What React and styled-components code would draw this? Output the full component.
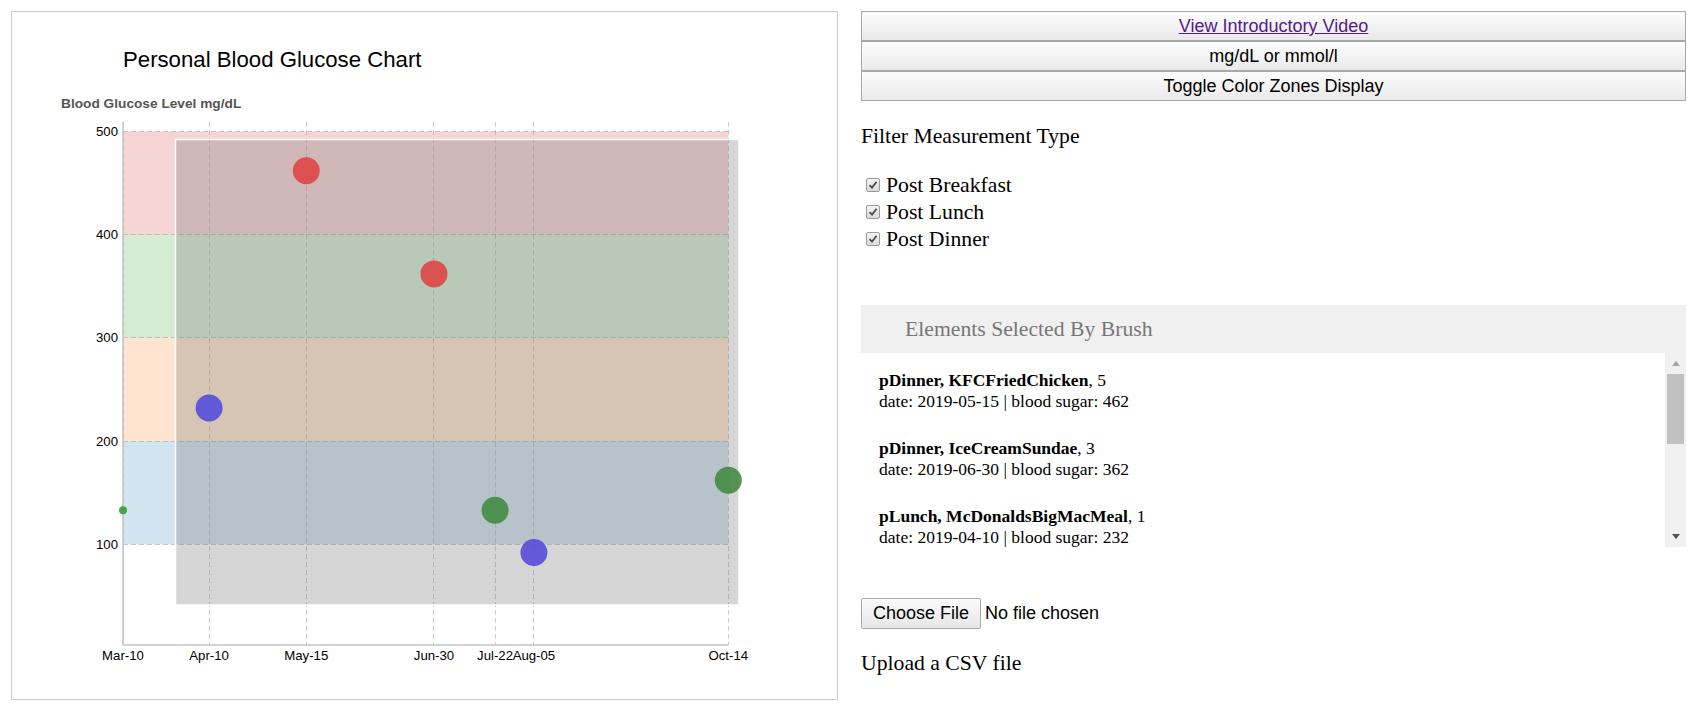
import React from "react";
import styled, { createGlobalStyle } from "styled-components";

const GlobalStyle = createGlobalStyle`
  body {
    margin: 0;
    background: #fff;
    color: #000;
    font-family: "Liberation Serif", "Times New Roman", serif;
  }
`;

const Page = styled.div`
  display: flex;
  align-items: flex-start;
  gap: 23px;
  padding: 11px 11px 0;
`;

/* ---------- chart ---------- */

const ChartPanel = styled.div`
  flex: none;
  width: 825px;
  height: 687px;
  border: 1px solid #ccc;
`;

const ChartSvg = styled.svg`
  display: block;
  font-family: "Liberation Sans", Arial, sans-serif;

  .title {
    font-size: 22.2px;
    fill: #000;
  }
  .axis-label {
    font-size: 13.7px;
    font-weight: bold;
    fill: #555;
  }
  .tick {
    font-size: 13.2px;
    fill: #000;
  }
  .grid {
    stroke: #999;
    stroke-opacity: 0.5;
    stroke-dasharray: 5 3;
    shape-rendering: crispEdges;
  }
  .axis {
    stroke: #c4c4c4;
    stroke-width: 1.5;
  }
  .brush {
    fill: #777;
    fill-opacity: 0.3;
    stroke: #fff;
    stroke-width: 1.5;
  }
`;

const X0 = 123;
const PX_PER_DAY = 2.7766;
const xOf = (d) => X0 + d * PX_PER_DAY;
const yOf = (v) => 647.5 - v * 1.032;

const dates = [
  { label: "Mar-10", d: 0 },
  { label: "Apr-10", d: 31 },
  { label: "May-15", d: 66 },
  { label: "Jun-30", d: 112 },
  { label: "Jul-22", d: 134 },
  { label: "Aug-05", d: 148 },
  { label: "Oct-14", d: 218 },
];

const zones = [
  { from: 400, to: 500, color: "#d62728" },
  { from: 300, to: 400, color: "#2ca02c" },
  { from: 200, to: 300, color: "#ff7f0e" },
  { from: 100, to: 200, color: "#1f77b4" },
];

const RED = "rgb(222,70,70)";
const BLUE = "rgb(86,76,218)";
const GREEN = "rgb(68,140,68)";

const dots = [
  { d: 0, v: 133, c: "rgb(52,160,52)", r: 4 },
  { d: 31, v: 232, c: BLUE, r: 13.5 },
  { d: 66, v: 462, c: RED, r: 13.5 },
  { d: 112, v: 362, c: RED, r: 13.5 },
  { d: 134, v: 133, c: GREEN, r: 13.5 },
  { d: 148, v: 92, c: BLUE, r: 13.5 },
  { d: 218, v: 162, c: GREEN, r: 13.5 },
];

const XMAX = xOf(218);
const AXIS_Y = 645;

const Chart = () => (
  <ChartPanel>
    <ChartSvg width="825" height="687" viewBox="12 12 825 687">
      <text className="title" x="123" y="66.7">
        Personal Blood Glucose Chart
      </text>
      <text className="axis-label" x="61" y="108.3">
        Blood Glucose Level mg/dL
      </text>

      {zones.map((z) => (
        <rect
          key={z.from}
          x={X0}
          y={yOf(z.to)}
          width={XMAX - X0}
          height={yOf(z.from) - yOf(z.to)}
          fill={z.color}
          fillOpacity="0.2"
        />
      ))}

      {[100, 200, 300, 400, 500].map((v) => (
        <line key={v} className="grid" x1={X0} x2={XMAX} y1={yOf(v)} y2={yOf(v)} />
      ))}
      {dates.map((t) => (
        <line key={t.label} className="grid" x1={xOf(t.d)} x2={xOf(t.d)} y1="122" y2={AXIS_Y} />
      ))}

      <line className="axis" x1={X0} x2={X0} y1="122" y2={AXIS_Y} />
      <line className="axis" x1={X0} x2={XMAX} y1={AXIS_Y} y2={AXIS_Y} />

      {[100, 200, 300, 400, 500].map((v) => (
        <text key={v} className="tick" x="118" y={yOf(v) + 4.5} textAnchor="end">
          {v}
        </text>
      ))}
      {dates.map((t) => (
        <text key={t.label} className="tick" x={xOf(t.d)} y="659.5" textAnchor="middle">
          {t.label}
        </text>
      ))}

      <rect className="brush" x="175.5" y="139.5" width="563.5" height="465.5" />

      {dots.map((p, i) => (
        <circle key={i} cx={xOf(p.d)} cy={yOf(p.v)} r={p.r} fill={p.c} fillOpacity="0.9" />
      ))}
    </ChartSvg>
  </ChartPanel>
);

/* ---------- side panel ---------- */

const SideColumn = styled.div`
  flex: 1;
  display: flex;
  flex-direction: column;
  min-width: 0;
`;

const WideButton = styled.button`
  display: block;
  box-sizing: border-box;
  width: 100%;
  height: 30px;
  margin: 0;
  padding: 0;
  border: 1px solid #a8a8a8;
  border-radius: 0;
  background: linear-gradient(#fdfdfd, #e9e9e9);
  color: #000;
  font-family: "Liberation Sans", Arial, sans-serif;
  font-size: 18px;
  line-height: 28px;
  text-align: center;
  cursor: pointer;
`;

const VideoLink = styled.a`
  color: #551a8b;
  text-decoration: underline;
`;

const Heading = styled.p`
  margin: ${(p) => p.$top || 0}px 0 0;
  font-size: 21.7px;
  line-height: 25px;
  color: ${(p) => p.$muted ? "#777" : "#000"};
`;

const CheckList = styled.div`
  margin-top: 22.7px;
  display: flex;
  flex-direction: column;
`;

const CheckRow = styled.label`
  display: flex;
  align-items: center;
  height: 27px;
  font-size: 21.7px;
`;

const Box = styled.span`
  box-sizing: border-box;
  width: 14px;
  height: 14px;
  margin: 0 6px 0 5px;
  border: 1px solid #9a9a9a;
  border-radius: 2px;
  background: linear-gradient(#f4f4f4, #dadada);
  display: flex;
  align-items: center;
  justify-content: center;
`;

const Check = ({ label }) => (
  <CheckRow>
    <Box>
      <svg width="10" height="10" viewBox="0 0 10 10">
        <path d="M1.5 5.2 L4 7.6 L8.6 1.8" fill="none" stroke="#4a4a4a" strokeWidth="1.8" />
      </svg>
    </Box>
    {label}
  </CheckRow>
);

const BrushBox = styled.div`
  margin-top: 52px;
`;

const BrushHeader = styled.div`
  height: 48px;
  padding-left: 44px;
  background: #f0f0f0;
  color: #777;
  font-size: 21.7px;
  line-height: 48px;
`;

const ListArea = styled.div`
  display: flex;
  height: 194px;
  background: #fff;
`;

const ListContent = styled.div`
  flex: 1;
  overflow: hidden;
  padding: 17.3px 0 0 18px;
  font-size: 17.5px;
  line-height: 21px;
`;

const Item = styled.div`
  margin-bottom: 26px;
`;

const ScrollTrack = styled.div`
  flex: none;
  width: 21px;
  display: flex;
  flex-direction: column;
  background: #f0f0f0;
`;

const ArrowCell = styled.div`
  height: 21px;
  display: flex;
  align-items: center;
  justify-content: center;
`;

const Triangle = styled.span`
  width: 0;
  height: 0;
  border-left: 4.5px solid transparent;
  border-right: 4.5px solid transparent;
  ${(p) =>
    p.$down
      ? "border-top: 5px solid #505050;"
      : "border-bottom: 5px solid #a3a3a3;"}
`;

const Thumb = styled.div`
  height: 70px;
  margin: 0 2px;
  background: #c1c1c1;
`;

const TrackFill = styled.div`
  flex: 1;
`;

const FileRow = styled.div`
  margin-top: 51px;
  display: flex;
  align-items: center;
  gap: 4px;
  font-family: "Liberation Sans", Arial, sans-serif;
  font-size: 18px;
`;

const FileButton = styled.button`
  box-sizing: border-box;
  width: 120px;
  height: 31px;
  margin: 0;
  padding: 0;
  border: 1px solid #a9a9a9;
  border-radius: 2px;
  background: linear-gradient(#fbfbfb, #e6e6e6);
  color: #000;
  font-family: inherit;
  font-size: 18px;
`;

const selected = [
  { meal: "pDinner, KFCFriedChicken", n: 5, date: "2019-05-15", sugar: 462 },
  { meal: "pDinner, IceCreamSundae", n: 3, date: "2019-06-30", sugar: 362 },
  { meal: "pLunch, McDonaldsBigMacMeal", n: 1, date: "2019-04-10", sugar: 232 },
];

const App = () => (
  <>
    <GlobalStyle />
    <Page>
      <Chart />
      <SideColumn>
        <WideButton>
          <VideoLink href="#">View Introductory Video</VideoLink>
        </WideButton>
        <WideButton>mg/dL or mmol/l</WideButton>
        <WideButton>Toggle Color Zones Display</WideButton>

        <Heading $top={23}>Filter Measurement Type</Heading>
        <CheckList>
          <Check label="Post Breakfast" />
          <Check label="Post Lunch" />
          <Check label="Post Dinner" />
        </CheckList>

        <BrushBox>
          <BrushHeader>Elements Selected By Brush</BrushHeader>
          <ListArea>
            <ListContent>
              {selected.map((s) => (
                <Item key={s.date}>
                  <strong>{s.meal}</strong>, {s.n}
                  <br />
                  date: {s.date} | blood sugar: {s.sugar}
                </Item>
              ))}
            </ListContent>
            <ScrollTrack>
              <ArrowCell>
                <Triangle />
              </ArrowCell>
              <Thumb />
              <TrackFill />
              <ArrowCell>
                <Triangle $down />
              </ArrowCell>
            </ScrollTrack>
          </ListArea>
        </BrushBox>

        <FileRow>
          <FileButton>Choose File</FileButton>
          <span>No file chosen</span>
        </FileRow>
        <Heading $top={22}>Upload a CSV file</Heading>
      </SideColumn>
    </Page>
  </>
);

export default App;
